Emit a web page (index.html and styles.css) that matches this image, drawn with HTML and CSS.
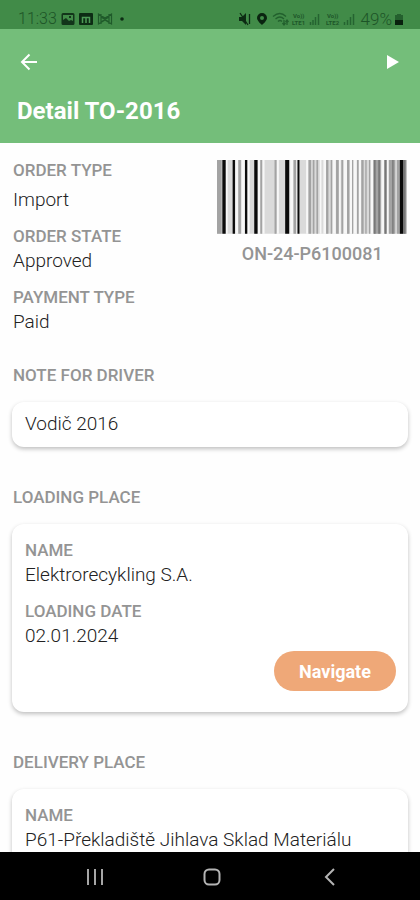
FILE: index.html
```html
<!DOCTYPE html>
<html lang="en">
<head>
<meta charset="utf-8">
<meta name="viewport" content="width=device-width, initial-scale=1">
<title>Detail TO-2016</title>
<link rel="stylesheet" href="styles.css">
</head>
<body>
<div class="status">
  <span class="clock">11:33</span>
  <svg class="status-left" width="70" height="16" viewBox="0 0 70 16" aria-hidden="true">
    <path fill="#12351a" fill-rule="evenodd" d="M2 2h10a1.500 1.500 0 0 1 1.500 1.500v9a1.500 1.500 0 0 1-1.500 1.500H2a1.500 1.500 0 0 1-1.500-1.500v-9A1.500 1.500 0 0 1 2 2zm0 2v5l3-2 3 3 2-1 2 1V4zM8 5h2v2H8z"/>
    <rect x="18" y="2" width="14" height="12" rx="1" fill="#0d2c14"/>
    <path fill="none" stroke="#4d9a56" stroke-width="1.500" d="M21.500 12V6.500h7V12M25 6.500V12"/>
    <path fill="none" stroke="#1f5a2a" stroke-width="1.200" d="M37.500 13V3l6.500 4 6.500-4v10L44 9zM40 3v10M48 3v10M40 6l8 5M48 6l-8 5"/>
    <circle cx="61" cy="8" r="1.800" fill="#0d2c14"/>
  </svg>
  <span class="spacer"></span>
  <svg width="120" height="16" viewBox="0 0 120 16" aria-hidden="true">
    <path fill="#0d2c14" d="M0 6h3l4-4v12l-4-4H0z"/>
    <path stroke="#0d2c14" stroke-width="1.300" fill="none" d="M1 2l8 12M10.500 3v10"/>
    <path fill="#0a2410" fill-rule="evenodd" d="M23 2a5 5 0 0 1 5 5c0 3-5 7-5 7s-5-4-5-7a5 5 0 0 1 5-5zm0 3a2 2 0 1 0 0 4 2 2 0 0 0 0-4z"/>
    <g fill="none" stroke="#22602d" stroke-width="1.300"><path d="M34 5.500q7-6 13 0M36.500 8q4.500-4 8.500 0M39 10.500q2-2 4 0M45 9v5M43.500 12l1.500 2 1.500-2M48 14V9M46.500 11L48 9l1.500 2"/></g>
    <g fill="#1d5628" font-family="Roboto, sans-serif" font-size="6" font-weight="700"><text x="54" y="7">Vo))</text><text x="53" y="14">LTE1</text><text x="88" y="7">Vo))</text><text x="87" y="14">LTE2</text></g>
    <g stroke="#256330" stroke-width="1.500"><path d="M71.500 14v-3M74 14v-5M76.500 14V6M79.500 14V3M105.500 14v-3M108.500 14v-5M111.500 14V6M114.500 14V3"/></g>
  </svg>
  <span class="level">49%</span>
  <svg width="8" height="14" viewBox="0 0 8 14" aria-hidden="true">
    <path fill="#24602e" d="M2 2h4v1h2v5H0V3h2z"/><path fill="#08200d" d="M0 8h8v5H0z"/>
  </svg>
</div>
<header class="header">
  <div class="toolbar">
    <button class="icon-btn" type="button" aria-label="Back">
      <svg width="18" height="18" viewBox="0 0 18 18"><path fill="none" stroke="#fff" stroke-width="2" d="M17 9H2M9.500 1.500L2 9l7.500 7.500"/></svg>
    </button>
    <button class="icon-btn" type="button" aria-label="Start">
      <svg width="12" height="14" viewBox="0 0 12 14"><path fill="#fff" d="M0 0l12 7-12 7z"/></svg>
    </button>
  </div>
  <h1>Detail TO-2016</h1>
</header>
<main class="content">
  <div class="summary">
    <dl class="fields">
      <div class="lead"><dt>ORDER TYPE</dt><dd>Import</dd></div>
      <div><dt>ORDER STATE</dt><dd>Approved</dd></div>
      <div><dt>PAYMENT TYPE</dt><dd>Paid</dd></div>
    </dl>
    <figure class="barcode">
      <svg viewBox="0 0 570 222" role="img" aria-label="Barcode ON-24-P6100081">
        <path fill="#dadada" d="M0 0h570v222H0z"/>
        <path fill="#f7f7f7" d="M27 0h5v222h-5zM56 0h8v222h-8zM74 0h11v222H74zM92 0h6v222h-6zM123 0h10v222h-10zM136 0h7v222h-7zM180 0h6v222h-6zM220 0h10v222h-10zM238 0h5v222h-5zM268 0h7v222h-7zM309 0h5v222h-5zM320 0h8v222h-8zM349 0h8v222h-8zM367 0h5v222h-5zM382 0h9v222h-9zM400 0h7v222h-7zM412 0h8v222h-8zM426 0h7v222h-7zM462 0h8v222h-8zM495 0h8v222h-8zM511 0h5v222h-5z"/>
        <path fill="#a3a3a3" d="M0 0h14v222H0zM64 0h8v222h-8zM130 0h6v222h-6zM173 0h6v222h-6zM230 0h8v222h-8zM275 0h8v222h-8zM288 0h5v222h-5zM299 0h5v222h-5zM328 0h7v222h-7zM342 0h4v222h-4zM358 0h8v222h-8zM374 0h5v222h-5zM391 0h7v222h-7zM406 0h3v222h-3zM421 0h5v222h-5zM434 0h7v222h-7zM446 0h4v222h-4zM457 0h4v222h-4zM470 0h23v222h-23zM503 0h8v222h-8zM517 0h19v222h-19zM541 0h29v222h-29z"/>
        <path fill="#777" d="M472 0h5v222h-5zM485 0h5v222h-5zM504 0h5v222h-5zM527 0h4v222h-4zM561 0h6v222h-6z"/>
        <path fill="#0b0b0b" d="M16 0h10v222H16zM47 0h7v222h-7zM84 0h7v222h-7zM112 0h10v222h-10zM205 0h12v222h-12zM242 0h6v222h-6zM550 0h10v222h-10z"/>
      </svg>
      <figcaption>ON-24-P6100081</figcaption>
    </figure>
  </div>
  <section>
    <h2>NOTE FOR DRIVER</h2>
    <div class="card note"><p>Vodič 2016</p></div>
  </section>
  <section>
    <h2>LOADING PLACE</h2>
    <div class="card">
      <dl class="fields">
        <div><dt>NAME</dt><dd>Elektrorecykling S.A.</dd></div>
        <div><dt>LOADING DATE</dt><dd>02.01.2024</dd></div>
      </dl>
      <button class="navigate" type="button">Navigate</button>
    </div>
  </section>
  <section>
    <h2>DELIVERY PLACE</h2>
    <div class="card">
      <dl class="fields">
        <div><dt>NAME</dt><dd>P61-Překladiště Jihlava Sklad Materiálu</dd></div>
      </dl>
    </div>
  </section>
</main>
<nav class="system" aria-label="System">
  <button type="button" aria-label="Recent apps"><svg width="18" height="18" viewBox="0 0 18 18"><path stroke="#a6a6a6" stroke-width="2" d="M2 1v16M9 1v16M16 1v16"/></svg></button>
  <button type="button" aria-label="Home"><svg width="18" height="18" viewBox="0 0 18 18"><rect x="1.500" y="1.500" width="15" height="15" rx="4.500" fill="none" stroke="#b4b4b4" stroke-width="2"/></svg></button>
  <button type="button" aria-label="Back"><svg width="18" height="18" viewBox="0 0 18 18"><path fill="none" stroke="#b4b4b4" stroke-width="2" d="M13 1L5 9l8 8"/></svg></button>
</nav>
</body>
</html>
```
FILE: styles.css
```css
* { box-sizing: border-box; }
body {
  margin: 0;
  height: 100vh;
  display: flex;
  flex-direction: column;
  background: #fefefe;
  color: #222;
  font-family: Roboto, sans-serif;
}
h1, h2, p, dl, dd, figure { margin: 0; }
button { border: 0; padding: 0; font: inherit; background: none; }
svg { display: block; }

.status {
  display: flex;
  align-items: center;
  height: 29px;
  padding: 8px 17px 0 18px;
  background: #418b48;
  color: #1d5427;
  font-size: 16px;
  font-weight: 300;
  line-height: 20px;
}
.status-left { margin-left: 4px; }
.spacer { flex: 1; }
.level { margin: 0 3px 0 2px; font-size: 17px; }

.header {
  height: 114px;
  padding: 17px 15px 0 17px;
  background: #74be7a;
  color: #fff;
}
.toolbar { display: flex; justify-content: space-between; height: 32px; }
.icon-btn { display: grid; place-items: center; width: 24px; height: 32px; }
h1 { margin-top: 18px; font-size: 24px; font-weight: 700; line-height: 30px; }

.content {
  flex: 1;
  min-height: 0;
  overflow-y: auto;
  scrollbar-width: none;
  padding: 15px 12px 24px;
}
.summary { display: flex; justify-content: space-between; margin-bottom: 28px; padding-left: 1px; }
.fields { display: grid; gap: 11px; }
dt, h2 {
  color: #949494;
  font-size: 17px;
  font-weight: 500;
  line-height: 24px;
}
dd, .note p { font-size: 19px; font-weight: 300; line-height: 26px; }
.lead dd { margin-top: 5px; }
.barcode { width: 49%; padding: 2px 1px 0 3px; }
.barcode svg { width: 100%; height: auto; }
figcaption {
  margin-top: 8px;
  color: #949494;
  font-size: 18px;
  font-weight: 500;
  line-height: 24px;
  text-align: center;
}

section { margin-bottom: 38px; }
h2 { margin: 0 0 15px 1px; }
.card {
  display: flex;
  flex-direction: column;
  padding: 14px 12px 21px 13px;
  border-radius: 12px;
  background: #fff;
  box-shadow: 0 2px 4px rgba(0, 0, 0, 0.25);
}
.note { padding: 9px 13px 10px; }
.navigate {
  align-self: flex-end;
  width: 122px;
  height: 40px;
  margin-top: 2px;
  border-radius: 20px;
  background: #efa878;
  color: #fff;
  font-size: 18px;
  font-weight: 700;
}

.system {
  display: grid;
  grid-template-columns: repeat(3, 1fr);
  height: 48px;
  padding: 2px 31px 0 36px;
  background: #000;
}
.system button { display: grid; place-items: center; }
```
